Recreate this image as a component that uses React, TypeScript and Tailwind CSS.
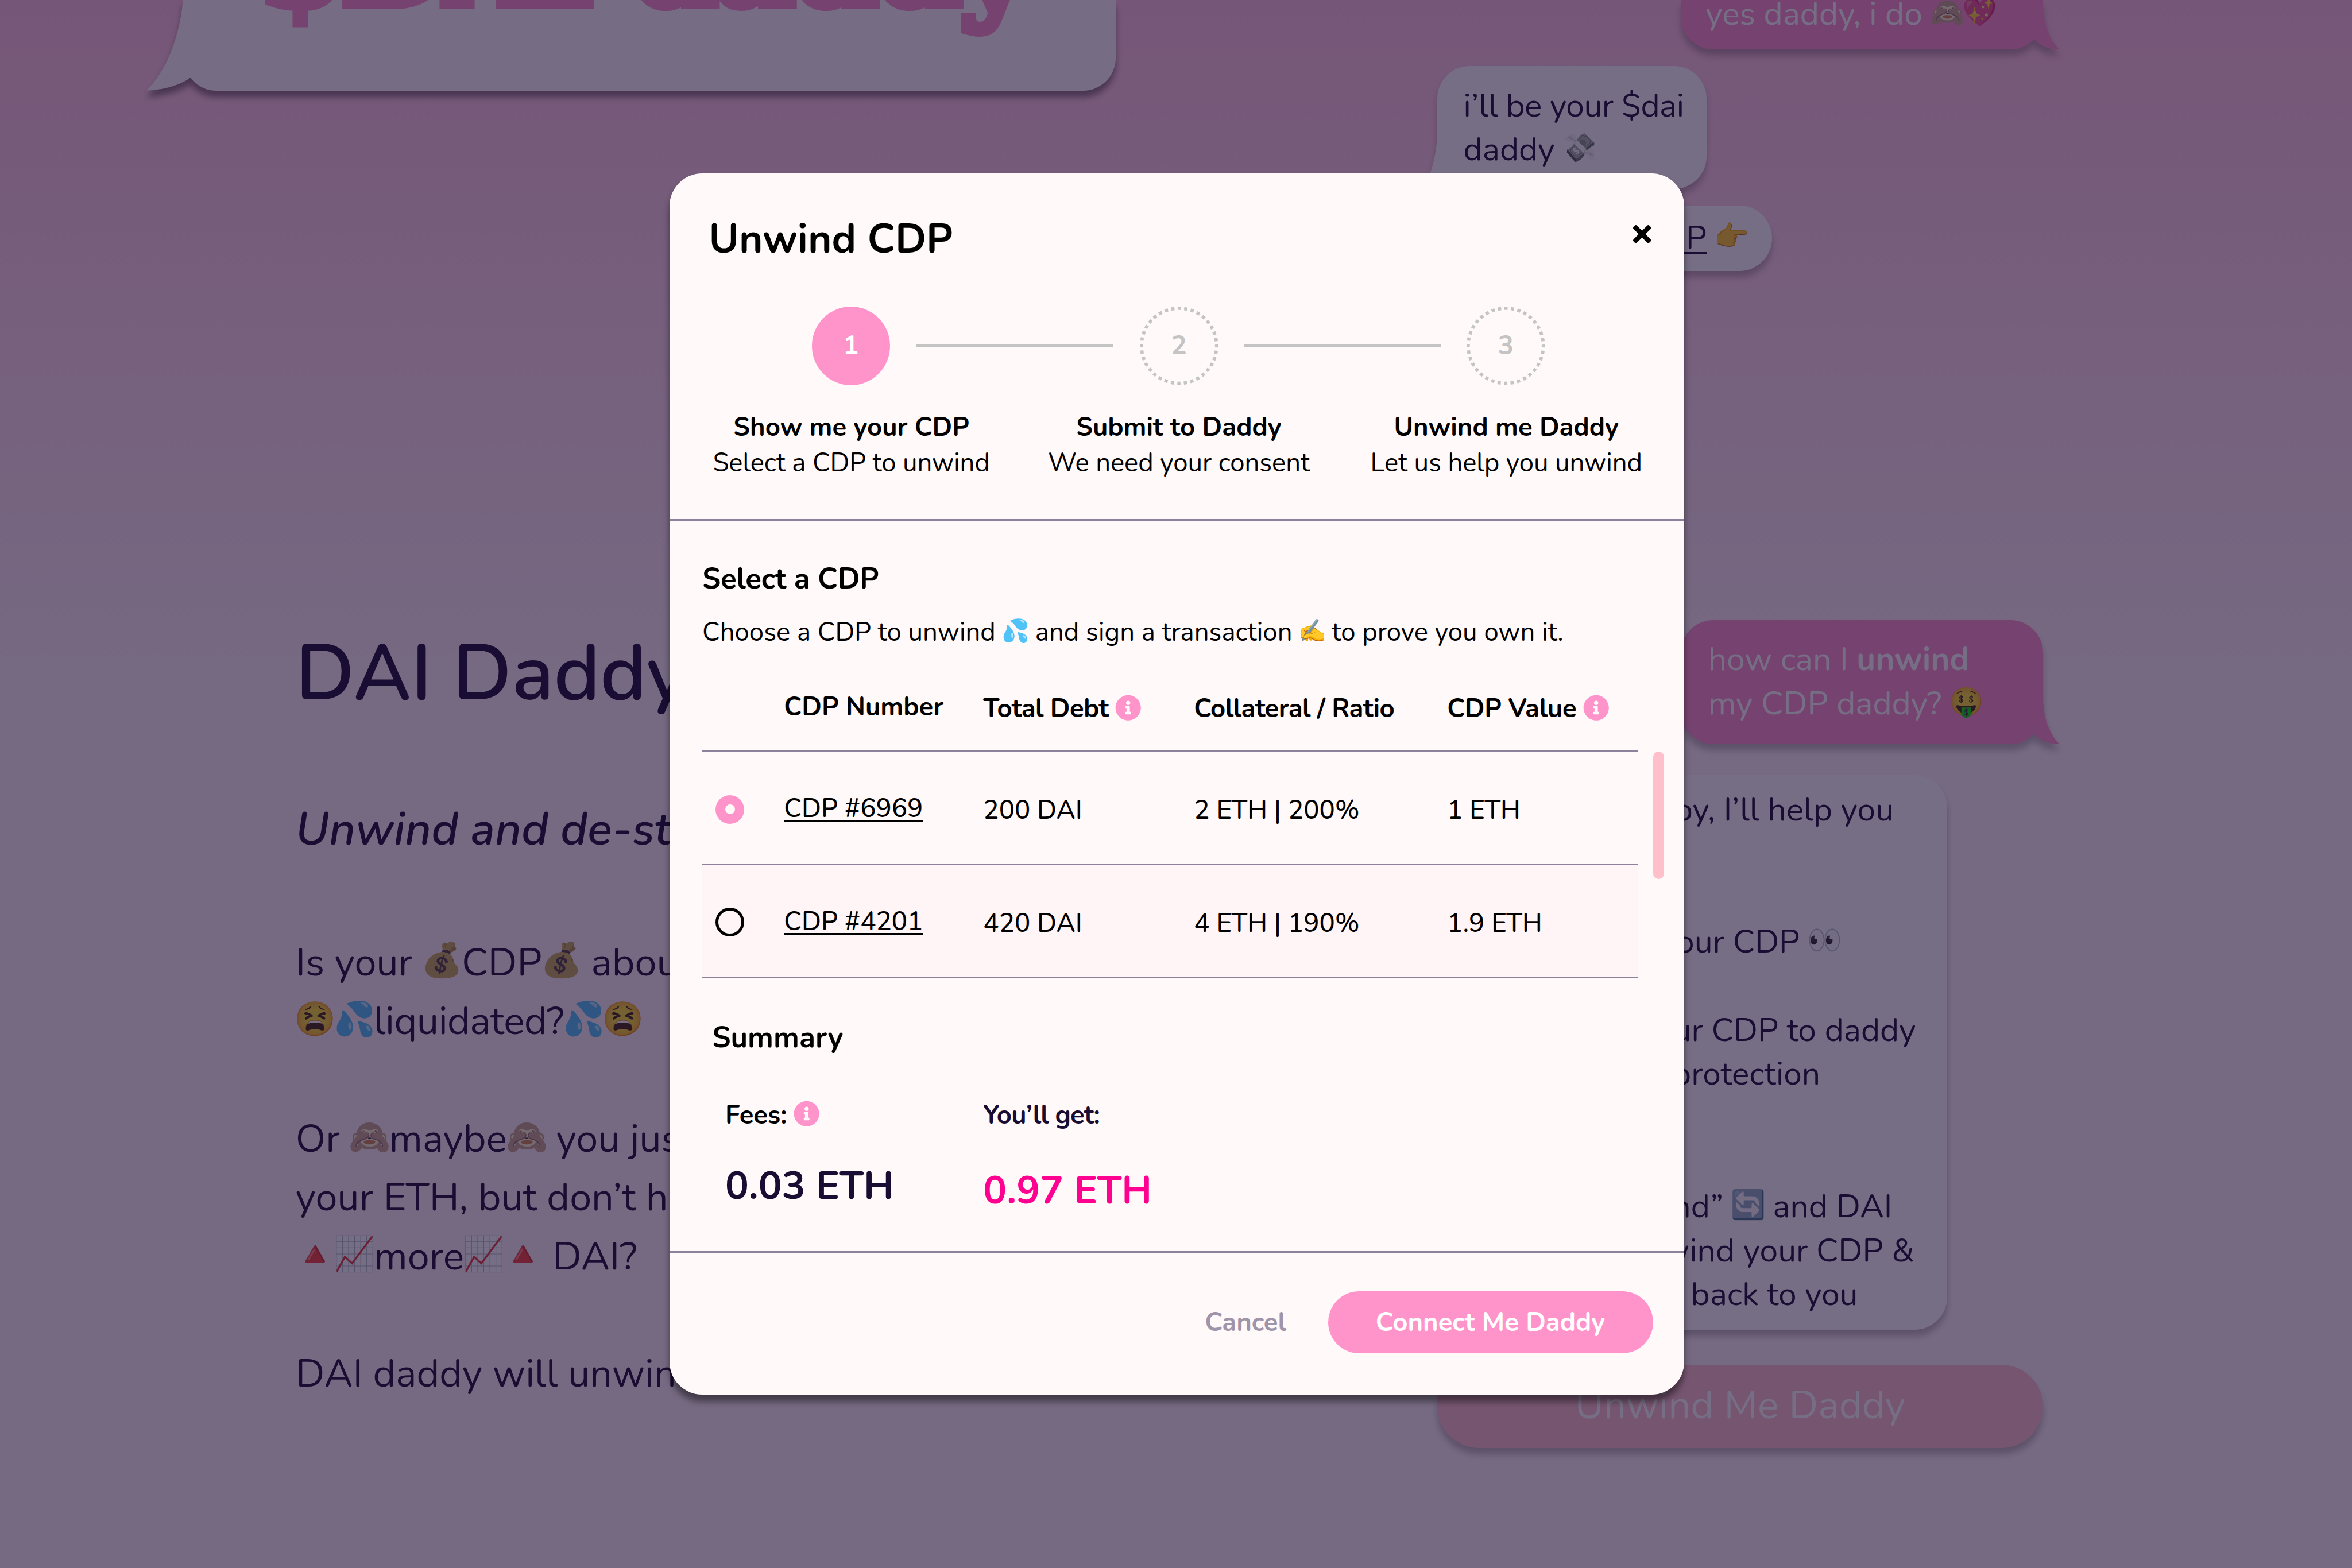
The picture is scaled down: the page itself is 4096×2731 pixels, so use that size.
import type { ReactNode } from "react";
import { FaInfoCircle, FaTimes } from "react-icons/fa";

/** Emoji drawn in a one-em box so that it sits in the line like a wide letter. */
function Emoji({ children, tone = "" }: { children: ReactNode; tone?: string }) {
  return (
    <span className="inline-flex w-[1em] justify-center align-[0.09em] leading-none">
      <span className={`text-[0.86em] leading-none ${tone}`}>{children}</span>
    </span>
  );
}

const Monkey = () => <Emoji tone="brightness-120 saturate-[0.55]">🙈</Emoji>;
const MoneyBag = () => <Emoji tone="brightness-85 saturate-[0.6]">💰</Emoji>;

function Info() {
  return <FaInfoCircle className="size-4 shrink-0 text-[#ff94cb]" />;
}

function Divider() {
  return <div className="h-[1.06px] shrink-0 bg-[#8d8299]" />;
}

function RightTail({ className }: { className: string }) {
  return (
    <svg viewBox="0 0 20 25" className="absolute -right-[10px] bottom-0 h-[25px] w-5">
      <path className={className} d="M0 0H10C10.6 10 14 19.5 20 25C14 25 9 23 5 19.4L0 15Z" />
    </svg>
  );
}

function LeftTail({ className }: { className: string }) {
  return (
    <svg viewBox="0 0 20 35" className="absolute bottom-0 -left-[10px] h-[35px] w-5">
      <path className={className} d="M20 0H10C9.4 15 6 28.5 0 35C6 35 11 33 15 29.4L20 25Z" />
    </svg>
  );
}

function Hero() {
  return (
    <div className="relative ml-[112.6px] h-[55.4px] w-[570.4px] rounded-b-[20px] bg-[#fff9f9] drop-shadow-[0_4px_2px_rgba(0,0,0,0.45)]">
      <svg viewBox="0 0 30 56" className="absolute bottom-0 -left-[23px] h-14 w-[30px]">
        <path fill="#fff9f9" d="M30 0H22.4C21 20 13 44 0 56C10 56 22 52.5 27.6 47.6L30 40Z" />
      </svg>
      <div className="h-[55.4px] overflow-hidden">
        <p className="-mt-[73.5px] ml-[45px] font-['DejaVu_Serif'] text-[76px] leading-[100px] font-bold tracking-[-2.1px] whitespace-nowrap text-[#ff94cb] [-webkit-text-stroke:5px_#ff94cb] [paint-order:stroke_fill]">
          $DAI daddy
        </p>
      </div>
    </div>
  );
}

function Article() {
  return (
    <article className="mt-[325px] ml-[181px] whitespace-nowrap text-[#1a0d33]">
      <h1 className="text-[48px] leading-[64px] font-semibold">DAI Daddy</h1>
      <h2 className="mt-[44.5px] text-[28px] leading-[38px] font-semibold italic">Unwind and de-stress</h2>
      <div className="mt-[44.6px] text-2xl leading-9">
        <p>
          Is your <MoneyBag />
          CDP
          <MoneyBag /> about to be
        </p>
        <p>
          <Emoji>😫</Emoji>
          <Emoji>💦</Emoji>
          <span className="tracking-[-0.16px]">liquidated?</span>
          <Emoji>💦</Emoji>
          <Emoji>😫</Emoji>
        </p>
        <p className="mt-9">
          Or <Monkey />
          maybe
          <Monkey /> you just
        </p>
        <p>your ETH, but don’t have</p>
        <p>
          <Emoji>🔺</Emoji>
          <Emoji>📈</Emoji>more<Emoji>📈</Emoji>
          <Emoji>🔺</Emoji> DAI?
        </p>
        <p className="mt-9">DAI daddy will unwind your</p>
      </div>
    </article>
  );
}

function Chat() {
  return (
    <div className="flex w-[400px] shrink-0 flex-col pl-[10px] text-xl leading-[27px] whitespace-nowrap text-[#1a0d33]">
      <div className="relative ml-[149px] flex h-[30.4px] w-[222px] items-start rounded-b-[20px] bg-[#ff94cb] drop-shadow-[0_4px_2px_rgba(0,0,0,0.25)]">
        <RightTail className="fill-[#ff94cb]" />
        <p className="-mt-[5px] pl-[15.3px] text-white">
          yes daddy, i do <Monkey />
          <Emoji>💖</Emoji>
        </p>
      </div>

      <div className="relative mt-[10px] h-[75.1px] w-[165px] rounded-[20px] bg-white pt-[10.8px] pl-4 drop-shadow-[0_4px_2px_rgba(0,0,0,0.25)]">
        <LeftTail className="fill-white" />
        <p className="tracking-[-0.18px]">i’ll be your $dai</p>
        <p>
          daddy <Emoji tone="saturate-[0.15] brightness-110">💸</Emoji>
        </p>
      </div>

      <div className="mt-[10.5px] flex h-10 w-[205px] justify-end rounded-[20px] bg-white pt-[6.3px] pr-[15px] drop-shadow-[0_4px_2px_rgba(0,0,0,0.25)]">
        <p>
          <span className="underline decoration-[1.2px] underline-offset-2">unwind my CDP</span> <Emoji>👉</Emoji>
        </p>
      </div>

      <div className="relative mt-[213.8px] ml-[149px] h-[76px] w-[222px] rounded-[20px] bg-[#ff94cb] pt-[10.4px] pl-[16.8px] text-white drop-shadow-[0_4px_2px_rgba(0,0,0,0.25)]">
        <RightTail className="fill-[#ff94cb]" />
        <p>
          how can I <b>unwind</b>
        </p>
        <p>
          my CDP daddy? <Emoji>🤑</Emoji>
        </p>
      </div>

      <div className="mt-[18.8px] flex h-[339.6px] w-[312px] flex-col items-end rounded-[20px] bg-white pt-[7.6px] drop-shadow-[0_4px_2px_rgba(0,0,0,0.25)]">
        <p className="mr-[32.5px]">baby, I’ll help you</p>
        <p className="mt-[54px] mr-[65px]">
          your CDP <Emoji>👀</Emoji>
        </p>
        <p className="mt-[27px] mr-[19px]">your CDP to daddy</p>
        <p className="mr-[77.5px]">protection</p>
        <p className="mt-[54px] mr-[33.5px]">
          “unwind” <Emoji>🔄</Emoji> and DAI
        </p>
        <p className="mr-[20px]">unwind your CDP &amp;</p>
        <p className="mr-[54.5px]">back to you</p>
      </div>

      <div className="mt-[21.4px] flex h-[51px] w-[371px] items-center justify-center rounded-full bg-[#ffc0cb] pb-px text-2xl tracking-[0.1px] text-white drop-shadow-[0_4px_2px_rgba(0,0,0,0.25)]">
        Unwind Me Daddy
      </div>
    </div>
  );
}

function DottedStep({ n }: { n: number }) {
  return (
    <div className="relative flex size-12 shrink-0 items-center justify-center text-[#c4c4c4]">
      <svg viewBox="0 0 48 48" className="absolute inset-0 size-12">
        <circle cx="24" cy="24" r="23" fill="none" stroke="#c4c4c4" strokeWidth="2" strokeDasharray="2 2.0142" strokeDashoffset="1" />
      </svg>
      {n}
    </div>
  );
}

const steps = [
  { title: "Show me your CDP", text: "Select a CDP to unwind" },
  { title: "Submit to Daddy", text: "We need your consent" },
  { title: "Unwind me Daddy", text: "Let us help you unwind" },
];

const rows = [
  { id: "CDP #6969", debt: "200 DAI", ratio: "2 ETH | 200%", value: "1 ETH", selected: true },
  { id: "CDP #4201", debt: "420 DAI", ratio: "4 ETH | 190%", value: "1.9 ETH", selected: false },
];

function Modal() {
  return (
    <div className="absolute top-[106px] left-[410px] flex h-[748px] w-[621px] flex-col rounded-[20px] bg-[#fff9f9] leading-[22px] whitespace-nowrap text-black shadow-[0_4px_4px_rgba(0,0,0,0.45)]">
      <div className="flex items-start justify-between pt-[23.8px] pr-5 pl-6">
        <h3 className="text-[25px] leading-[34px] font-bold">Unwind CDP</h3>
        <FaTimes className="mt-[5.4px] h-4 w-[11px]" />
      </div>

      <div className="mt-[24px] flex items-center gap-4 pl-[87px] font-bold">
        <div className="flex size-12 shrink-0 items-center justify-center rounded-full bg-[#ff94cb] text-white">1</div>
        <div className="h-[2px] w-[120.8px] bg-[#c4c4c4]" />
        <DottedStep n={2} />
        <div className="h-[2px] w-[120.2px] bg-[#c4c4c4]" />
        <DottedStep n={3} />
      </div>

      <div className="mt-[14.8px] grid grid-cols-[repeat(3,200.5px)] pl-[11px] text-center">
        {steps.map((s) => (
          <div key={s.title}>
            <p className="font-bold">{s.title}</p>
            <p className="tracking-[-0.03px]">{s.text}</p>
          </div>
        ))}
      </div>

      <div className="mt-[23.2px] flex shrink-0 flex-col">
        <Divider />
      </div>

      <div className="pl-5">
        <h4 className="mt-[23.7px] text-lg leading-6 font-bold tracking-[-0.1px]">Select a CDP</h4>
        <p className="mt-[9.8px]">
          Choose a CDP to unwind <Emoji>💦</Emoji> and sign a transaction <Emoji>✍️</Emoji> to prove you own it.
        </p>

        <div className="flex">
          <div className="w-[573px]">
            <div className="grid h-[61.3px] grid-cols-[50px_122px_129px_155px_1fr] pt-[24.7px] font-bold">
              <span />
              <span className="-mt-px">CDP Number</span>
              <span className="flex gap-1">
                <span className="tracking-[-0.2px]">Total Debt</span>
                <span className="pt-[2.2px]">
                  <Info />
                </span>
              </span>
              <span className="tracking-[-0.2px]">Collateral / Ratio</span>
              <span className="flex gap-1">
                <span className="tracking-[-0.1px]">CDP Value</span>
                <span className="pt-[2.2px]">
                  <Info />
                </span>
              </span>
            </div>
            <Divider />
            {rows.map((r) => (
              <div key={r.id} className={r.selected ? "" : "bg-[#fff5f7]"}>
                <div className="grid h-[68.1px] grid-cols-[50px_122px_129px_155px_1fr] items-center pt-[3px] font-medium">
                  <span className="pl-[8.2px]">
                    {r.selected ? (
                      <span className="mb-[1.4px] flex size-[17.6px] items-center justify-center rounded-full bg-[#ff94cb]">
                        <span className="size-[6px] rounded-full bg-[#fff9f9]" />
                      </span>
                    ) : (
                      <span className="mb-[1.4px] block size-[17.6px] rounded-full border-[1.8px] border-black" />
                    )}
                  </span>
                  <span className="pb-[2px] underline decoration-[1px] underline-offset-[1.6px]">{r.id}</span>
                  <span>{r.debt}</span>
                  <span>{r.ratio}</span>
                  <span>{r.value}</span>
                </div>
                <Divider />
              </div>
            ))}
          </div>
          <div className="mt-[62px] ml-[9px] h-[78px] w-[7px] rounded-full bg-[#ffc0cb]" />
        </div>

        <h4 className="mt-[24.2px] pl-[6px] text-lg leading-6 font-bold">Summary</h4>
        <div className="mt-[24.7px] flex pl-[14px] font-bold">
          <div className="w-[158px]">
            <p className="flex gap-1">
              Fees:
              <span className="pt-[2px]">
                <Info />
              </span>
            </p>
            <p className="mt-[15.8px] text-2xl leading-[33px] text-[#1a0d33]">0.03 ETH</p>
          </div>
          <div>
            <p className="tracking-[-0.3px] text-[#1a0d33]">You’ll get:</p>
            <p className="mt-[18.6px] text-2xl leading-[33px] text-[#ff0090]">0.97 ETH</p>
          </div>
        </div>
      </div>

      <div className="mt-[20.4px] flex shrink-0 flex-col">
        <Divider />
      </div>

      <div className="mt-[23.8px] flex items-center justify-end gap-[25.5px] pr-[19px] font-bold">
        <button className="text-[#9f95ab]">Cancel</button>
        <button className="h-[38px] w-[199px] rounded-full bg-[#ff94cb] text-white">Connect Me Daddy</button>
      </div>
    </div>
  );
}

export default function App() {
  return (
    <div className="relative h-[960.2px] w-[1440px] overflow-hidden font-['Nunito','Lato',sans-serif] text-base [zoom:2.84444]">
      <div className="flex h-full bg-[linear-gradient(#ffc3df_0px,#fff5f8_430px)]">
        <div className="w-[870px] shrink-0">
          <Hero />
          <Article />
        </div>
        <Chat />
      </div>
      <div className="absolute inset-0 bg-[#1a0d33]/60" />
      <Modal />
    </div>
  );
}
